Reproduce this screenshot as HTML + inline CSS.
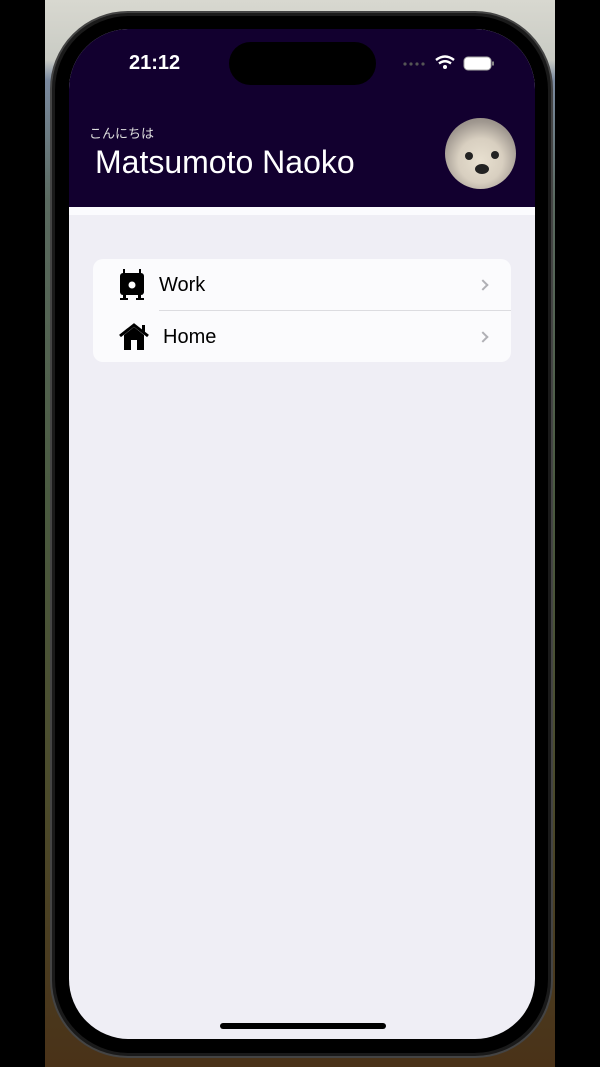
<!DOCTYPE html>
<html><head><meta charset="utf-8"><style>
*{margin:0;padding:0;box-sizing:border-box}
body{width:600px;height:1067px;background:#000;position:relative;overflow:hidden;font-family:"Liberation Sans","Noto Sans CJK JP",sans-serif}
.bg{position:absolute;left:45px;top:0;width:510px;height:1067px;background:linear-gradient(#d8d8d0 0,#c9cbc4 60px,#7b8aa0 80px,#5a6a60 200px,#4a5a40 500px,#4b4a2a 800px,#4a3218 1067px)}
.frame{position:absolute;left:50px;top:11px;width:503px;height:1047px;border-radius:78px;background:#1a1a1a;border:2px solid #444}
.bezel{position:absolute;left:55px;top:16px;width:493px;height:1037px;border-radius:74px;background:#000}
.screen{position:absolute;left:69px;top:29px;width:466px;height:1010px;border-radius:60px;background:#efeef5;overflow:hidden}
.hdr{position:absolute;left:0;top:0;width:466px;height:178px;background:#12002f}
.strip{position:absolute;left:0;top:178px;width:466px;height:8px;background:#fbfbfe}
.island{position:absolute;left:160px;top:13px;width:147px;height:43px;border-radius:22px;background:#000}
.time{position:absolute;left:60px;top:23px;color:#fff;font-weight:bold;font-size:20px}
.hello{position:absolute;left:20px;top:94px;color:#ddd;font-size:13px}
.name{position:absolute;left:26px;top:115px;color:#fff;font-size:32px}
.av{position:absolute;left:376px;top:89px;width:71px;height:71px;border-radius:50%;background:radial-gradient(circle at 50% 60%,#e8e0d0 0,#d8cfc0 40%,#a09890 70%,#807870 100%)}
.card{position:absolute;left:24px;top:230px;width:418px;height:103px;border-radius:10px;background:#fbfbfd}
.sep{position:absolute;left:66px;top:51px;right:0;height:1px;background:#dcdce0}
.lbl{position:absolute;font-size:20px;color:#000}
.chev{position:absolute;right:24px;width:8px;height:8px;border-right:2px solid #b0b0b5;border-top:2px solid #b0b0b5;transform:rotate(45deg)}
.homebar{position:absolute;left:151px;top:994px;width:166px;height:6px;border-radius:3px;background:#000}
</style></head><body>
<div class="bg"></div>
<div class="frame"></div>
<div class="bezel"></div>
<div class="screen">
<div class="hdr"></div><div class="strip"></div>
<div class="island"></div>
<div class="time">21:12</div>
<svg style="position:absolute;left:333px;top:25px" width="95" height="20">
<circle cx="3" cy="10" r="1.6" fill="#555"/><circle cx="9" cy="10" r="1.6" fill="#555"/><circle cx="15" cy="10" r="1.6" fill="#555"/><circle cx="21" cy="10" r="1.6" fill="#555"/>
<path d="M34 6 Q43 -1 52 6" stroke="#fff" stroke-width="2.4" fill="none"/><path d="M37 9.5 Q43 5 49 9.5" stroke="#fff" stroke-width="2.4" fill="none"/><circle cx="43" cy="13" r="2" fill="#fff"/>
<rect x="62" y="3" width="27" height="13" rx="4" fill="#fff" stroke="#aaa" stroke-width="1"/><rect x="90" y="7.5" width="2" height="4" fill="#888"/>
</svg>
<div class="hello">こんにちは</div>
<div class="name">Matsumoto Naoko</div>
<div class="av"><svg width="71" height="71"><circle cx="24" cy="38" r="4" fill="#222"/><circle cx="50" cy="37" r="4" fill="#222"/><ellipse cx="37" cy="51" rx="7" ry="5" fill="#222"/></svg></div>
<div class="card">
<svg style="position:absolute;left:26px;top:10px" width="28" height="32"><rect x="1" y="4" width="24" height="22" rx="3" fill="#000"/><rect x="4" y="0" width="2" height="5" fill="#000"/><rect x="20" y="0" width="2" height="5" fill="#000"/><rect x="4" y="25" width="3" height="5" fill="#000"/><rect x="19" y="25" width="3" height="5" fill="#000"/><rect x="1" y="29" width="8" height="2" fill="#000"/><rect x="17" y="29" width="8" height="2" fill="#000"/><circle cx="13" cy="16" r="3.5" fill="#fff"/></svg>
<div class="lbl" style="left:66px;top:15px">Work</div>
<div class="chev" style="top:22px"></div>
<div class="sep"></div>
<svg style="position:absolute;left:26px;top:64px" width="32" height="28"><path d="M1 13 L15 2 L29 13" stroke="#000" stroke-width="3" fill="none"/><rect x="23" y="2" width="3" height="7" fill="#000"/><path d="M5 12 L15 4 L25 12 V27 H5 Z" fill="#000"/><rect x="12" y="17" width="6" height="10" fill="#fff"/></svg>
<div class="lbl" style="left:70px;top:67px">Home</div>
<div class="chev" style="top:74px"></div>
</div>
<div class="homebar"></div>
</div>
</body></html>
